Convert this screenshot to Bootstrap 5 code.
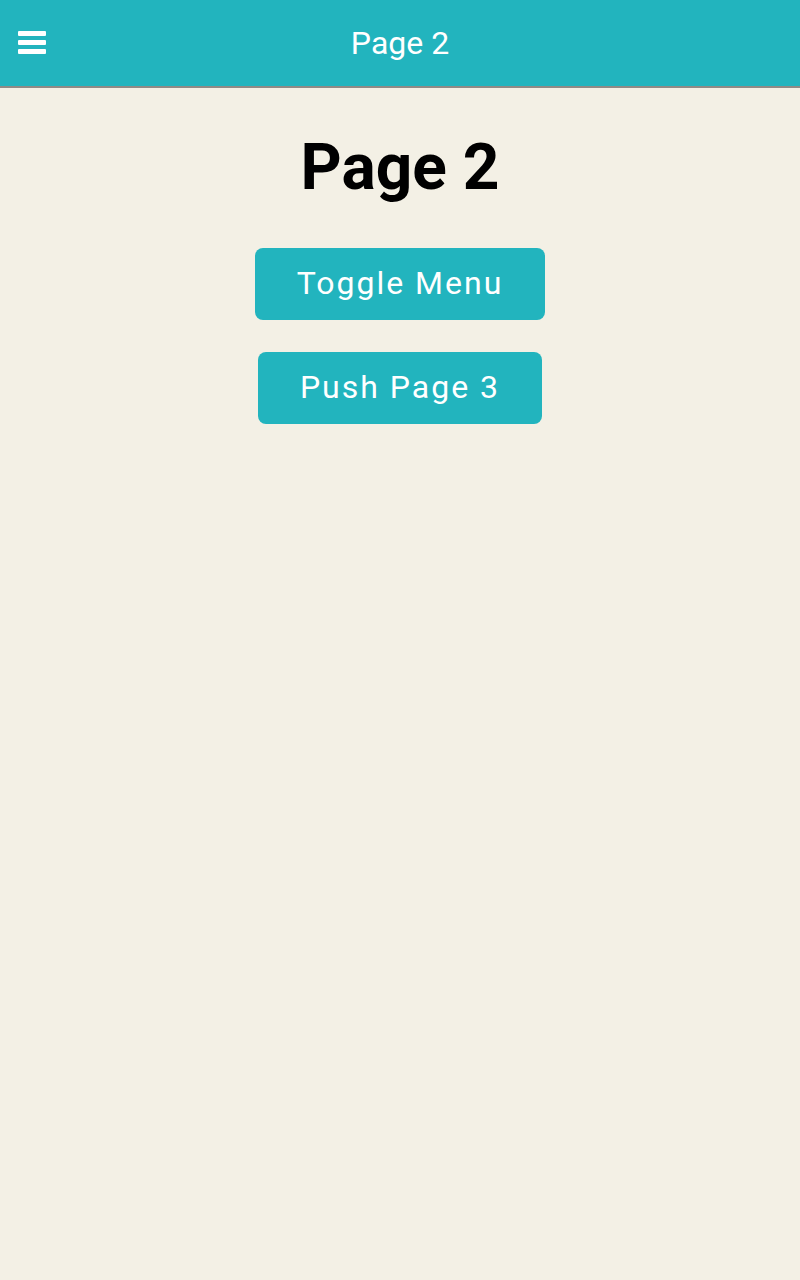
<!DOCTYPE html>
<html lang="en">
<head>
<meta charset="utf-8">
<meta name="viewport" content="width=device-width, initial-scale=1">
<title>Page 2</title>
<link href="https://cdn.jsdelivr.net/npm/bootstrap@5.3.0/dist/css/bootstrap.min.css" rel="stylesheet">
<style>
  body { background: #f3f0e5; color: #000; font-family: Roboto, sans-serif; }
  .topbar { height: 88px; background: #22b4be; border-bottom: 2px solid #8f8a86; color: #fff; }
  .topbar-side { width: 64px; }
  .menu-button { padding: 0 18px; line-height: 1; }
  .bar-title { font-size: 32px; line-height: 40px; }
  .page-body { padding-top: 40px; }
  .page-title { margin-bottom: 40px; font-size: 64px; line-height: 80px; font-weight: 700; }
  .action-list { gap: 32px; }
  .action-button { padding: 15px 42px 17px; border: 0; border-radius: 8px; background: #22b4be; color: #fff; font-size: 32px; line-height: 40px; letter-spacing: 2px; }
  .action-button:hover { background: #1c9ea7; color: #fff; }
</style>
</head>
<body>
<header class="topbar d-flex align-items-center">
  <div class="topbar-side">
    <button type="button" class="menu-button btn border-0 text-white d-flex" aria-label="Menu">
      <svg width="28" height="24" viewBox="0 0 28 24" fill="currentColor" aria-hidden="true"><rect y="0" width="28" height="5" rx="1"/><rect y="9" width="28" height="5" rx="1"/><rect y="18" width="28" height="5" rx="1"/></svg>
    </button>
  </div>
  <div class="bar-title flex-grow-1 text-center">Page 2</div>
  <div class="topbar-side"></div>
</header>
<main class="page-body container-fluid d-flex flex-column align-items-center">
  <h1 class="page-title">Page 2</h1>
  <div class="action-list d-flex flex-column align-items-center">
    <button type="button" class="action-button btn">Toggle Menu</button>
    <button type="button" class="action-button btn">Push Page 3</button>
  </div>
</main>
<script src="https://cdn.jsdelivr.net/npm/bootstrap@5.3.0/dist/js/bootstrap.bundle.min.js"></script>
</body>
</html>
